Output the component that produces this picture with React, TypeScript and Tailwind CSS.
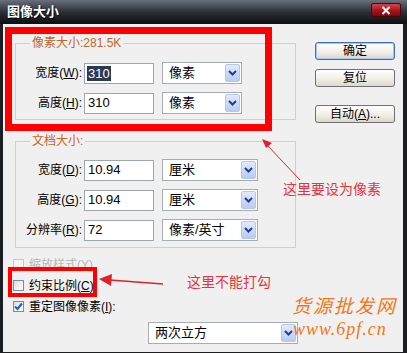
import React from 'react'

const FONT = "font-['Liberation_Sans','Noto_Sans_CJK_SC',sans-serif]"

function Chevron() {
  return (
    <svg width="9" height="6" viewBox="0 0 9 6">
      <path d="M1 1 L4.5 4.5 L8 1" fill="none" stroke="#1f3f8f" strokeWidth="2" />
    </svg>
  )
}

function Select({ text, className }: { text: string; className: string }) {
  return (
    <div className={`h-[22px] bg-white border border-[#a5acb5] flex items-center justify-between pl-[6px] pr-[1px] ${className}`}>
      <span className="text-[13px] text-black">{text}</span>
      <div className="w-[15px] h-[18px] rounded-[2px] border border-[#b6c7ec] bg-linear-to-b from-[#e2eafb] to-[#b9cbf1] flex items-center justify-center">
        <Chevron />
      </div>
    </div>
  )
}

function Field({ label, mn, value, unit, unitW, selected }: {
  label: string; mn: string; value: string; unit: string; unitW: string; selected?: boolean
}) {
  return (
    <div className="flex items-center h-[22px]">
      <div className="w-[66px] text-right text-[12px] text-black whitespace-nowrap">
        {label}(<u>{mn}</u>):
      </div>
      <div className="ml-[2px] w-[70px] h-[21px] bg-white border border-[#9ea6b1] flex items-center pl-[2px] text-[13px]">
        {selected ? <span className="bg-[#2b3a52] text-white px-[1px] leading-[15px]">{value}</span> : <span className="pl-[1px]">{value}</span>}
      </div>
      <Select text={unit} className={`ml-[8px] ${unitW}`} />
    </div>
  )
}

function Button({ children, def }: { children: React.ReactNode; def?: boolean }) {
  return (
    <div className={`w-[80px] h-[18px] rounded-[3px] border flex items-center justify-center text-[12px] text-black bg-linear-to-b from-[#ffffff] via-[#f3f1ea] to-[#dcd8cc] ${def ? 'border-[#3c6fc0] shadow-[inset_0_0_0_1px_#a8c8f0]' : 'border-[#707070]'}`}>
      {children}
    </div>
  )
}

function Check({ checked, disabled, children }: { checked?: boolean; disabled?: boolean; children: React.ReactNode }) {
  return (
    <div className="flex items-center h-[21px]">
      <div className={`ml-[-2px] w-[11px] h-[11px] border flex items-center justify-center ${disabled ? 'border-[#c9c9c0] bg-[#f4f4f0]' : 'border-[#7b8ea8] bg-linear-to-br from-[#dcdcd6] to-[#ffffff]'}`}>
        {checked && (
          <svg width="9" height="9" viewBox="0 0 9 9">
            <path d="M1 4.5 L3.5 7 L8 1.5" fill="none" stroke="#1a5fc8" strokeWidth="2" />
          </svg>
        )}
      </div>
      <span className={`ml-[5px] text-[12px] ${disabled ? 'text-[#b8b8b0]' : 'text-black'}`}>{children}</span>
    </div>
  )
}

export default function App() {
  return (
    <div className={`relative w-[407px] h-[353px] overflow-hidden bg-[#1b1e23] ${FONT}`}>
      {/* title bar */}
      <div className="h-[24px] flex items-start justify-between bg-linear-to-b from-[#69707c] via-[#2b3038] to-[#0d0e11]">
        <span className="ml-[7px] mt-[4px] text-[13px] font-bold text-white leading-[15px] [text-shadow:1px_1px_1px_#000]">图像大小</span>
        <div className="mt-[3px] mr-[6px] w-[30px] h-[14px] rounded-[2px] border border-[#4a0808] bg-linear-to-b from-[#d2444c] via-[#a8161e] to-[#7a0a10] flex items-center justify-center">
          <svg width="10" height="9" viewBox="0 0 10 9">
            <path d="M1.5 1 L8.5 8 M8.5 1 L1.5 8" stroke="#ffffff" strokeWidth="2" />
          </svg>
        </div>
      </div>

      {/* body */}
      <div className="ml-[3px] mr-[4px] h-[328px] bg-[#f0f0f0] flex">
        <div className="pl-[12px] pt-[12px] w-[293px] flex flex-col">
          <fieldset className="border border-[#d0d0c8] pb-[5px]">
            <legend className="ml-[14px] px-[2px] text-[12px] leading-[14px] text-[#c0672a]">像素大小:281.5K</legend>
            <div className="mt-[12px] flex flex-col gap-[8px]">
              <Field label="宽度" mn="W" value="310" unit="像素" unitW="w-[80px]" selected />
              <Field label="高度" mn="H" value="310" unit="像素" unitW="w-[80px]" />
            </div>
          </fieldset>

          <fieldset className="mt-[14px] border border-[#d0d0c8] pb-[6px]">
            <legend className="ml-[14px] px-[2px] text-[12px] leading-[14px] text-[#c0672a]">文档大小:</legend>
            <div className="mt-[11px] flex flex-col gap-[8px]">
              <Field label="宽度" mn="D" value="10.94" unit="厘米" unitW="w-[96px]" />
              <Field label="高度" mn="G" value="10.94" unit="厘米" unitW="w-[96px]" />
              <Field label="分辨率" mn="R" value="72" unit="像素/英寸" unitW="w-[96px]" />
            </div>
          </fieldset>

          <div className="mt-[6px] flex flex-col">
            <Check disabled>缩放样式(<u>Y</u>)</Check>
            <Check>约束比例(<u>C</u>)</Check>
            <Check checked>重定图像像素(<u>I</u>):</Check>
          </div>

          <Select text="两次立方" className="mt-[5px] ml-[133px] w-[150px] h-[21px]" />
        </div>

        <div className="ml-[19px] pt-[18px] flex flex-col">
          <Button def>确定</Button>
          <div className="mt-[9px]"><Button>复位</Button></div>
          <div className="mt-[18px]"><Button>自动(<u>A</u>)...</Button></div>
        </div>
      </div>

      {/* annotations overlay */}
      <div className="absolute left-[5px] top-[27px] w-[267px] h-[104px] border-[7px] border-[#ff0000]" />
      <div className="absolute left-[8px] top-[267px] w-[89px] h-[30px] border-[4px] border-[#ff0000]" />

      <svg className="absolute left-0 top-0 pointer-events-none" width="407" height="353">
        <line x1="300" y1="180" x2="267" y2="145" stroke="#e0202a" strokeWidth="1" />
        <polygon points="262,139 272,143 266,148" fill="#e0202a" />
        <line x1="163" y1="284" x2="110" y2="280" stroke="#e0202a" strokeWidth="1.3" />
        <polygon points="99,279 112,274 111,286" fill="#e0202a" />
      </svg>

      <span className="absolute left-[283px] top-[181px] text-[14px] leading-[16px] text-[#e8333c]">这里要设为像素</span>
      <span className="absolute left-[187px] top-[274px] text-[14px] leading-[16px] text-[#e8333c]">这里不能打勾</span>

      <span className="absolute left-[292px] top-[297px] text-[19px] leading-[20px] tracking-[2px] text-[#f0781a] italic font-['Liberation_Serif','Noto_Sans_CJK_SC',serif]">货源批发网</span>
      <span className="absolute left-[293px] top-[319px] text-[18px] leading-[20px] tracking-[1px] text-[#f0781a] italic font-['Liberation_Serif',serif]">www.6pf.cn</span>
    </div>
  )
}
